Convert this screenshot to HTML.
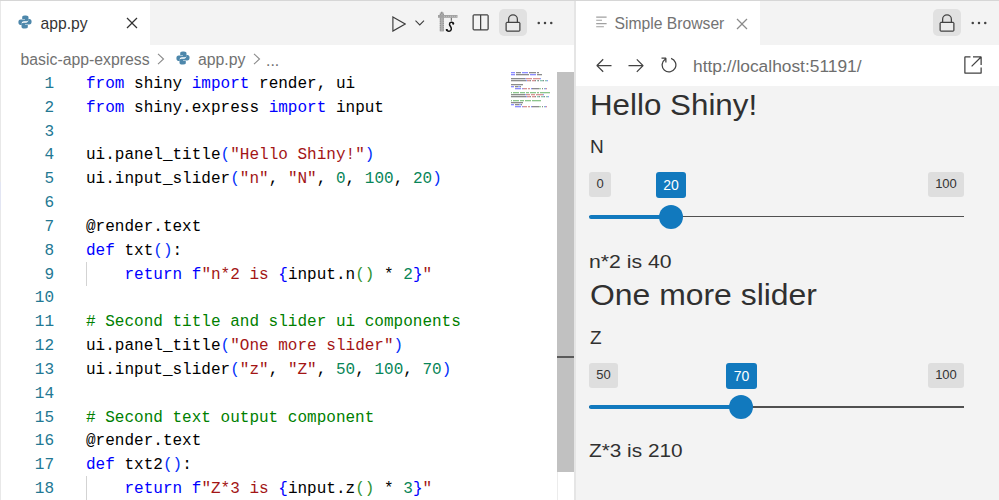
<!DOCTYPE html>
<html><head><meta charset="utf-8">
<style>
*{box-sizing:border-box;margin:0;padding:0}
html,body{width:999px;height:500px;overflow:hidden;background:#fff;font-family:"Liberation Sans",sans-serif}
.a{position:absolute}
#topline{left:0;top:0;width:999px;height:1px;background:#d6d6d6}
/* left group */
#ltabs{left:0;top:1px;width:574px;height:44px;background:#f3f3f3}
#ltab{left:0;top:1px;width:150px;height:44px;background:#fff}
#lborder{left:0;top:1px;width:1px;height:499px;background:#e8e8e8}
.tabtxt{font-size:15.7px;line-height:normal;color:#333;white-space:nowrap}
#bread{left:0;top:45px;width:574px;height:27px;background:#fff}
.bc{font-size:15.8px;color:#717171;white-space:nowrap}
#editor{left:0;top:72px;width:574px;height:428px;background:#fff}
.ln{position:absolute;left:0;width:54px;text-align:right;font-family:"Liberation Mono",monospace;font-size:16.03px;color:#237893;line-height:23.75px;height:23.75px}
.cl{position:absolute;left:86px;font-family:"Liberation Mono",monospace;font-size:16.03px;color:#000;line-height:23.75px;height:23.75px;white-space:pre}
.k{color:#0000ff}.s{color:#a31515}.n{color:#098658}.c{color:#008000}.p1{color:#0431fa}.p2{color:#319331}
#sbtrack{left:557px;top:72px;width:17px;height:428px;border-left:1px solid #ececec}
#sbthumb{left:557px;top:72px;width:17px;height:400px;background:#c1c1c1}
#sbmark{left:557px;top:356px;width:17px;height:2px;background:#5a5a5a}
#sep{left:574px;top:1px;width:2px;height:499px;background:#e5e5e5}
/* right group */
#rtabs{left:576px;top:1px;width:423px;height:44px;background:#f3f3f3}
#rtab{left:576px;top:1px;width:184px;height:44px;background:#fff}
#nav{left:576px;top:45px;width:423px;height:41px;background:#fff}
#page{left:576px;top:86px;width:423px;height:414px;background:#f3f3f3}
.btnbg{background:#e1e1e1;border-radius:5px}
.pg{color:#303030;transform-origin:0 0;white-space:nowrap;font-family:"Liberation Sans",sans-serif}
.badge{position:absolute;height:24.6px;border-radius:3px;background:#dedede;color:#333;font-size:13px;text-align:center;line-height:23px}
.vbadge{position:absolute;height:26px;border-radius:3px;background:#1179be;color:#fff;font-size:14px;text-align:center;line-height:26px}
.track{position:absolute;height:1.6px;background:#505050}
.bar{position:absolute;height:4.2px;background:#1179be;border-radius:2px}
.handle{position:absolute;width:24px;height:24px;border-radius:50%;background:#1179be}
</style></head><body>
<div id="topline" class="a"></div>

<!-- LEFT EDITOR GROUP -->
<div id="ltabs" class="a"></div>
<div id="ltab" class="a"></div>
<div id="bread" class="a"></div>
<div id="editor" class="a"></div>
<div id="lborder" class="a"></div>
<div class="a" style="left:0;top:182px;width:1px;height:28px;background:#e2e5f3"></div>

<!-- tab: python icon -->
<svg class="a" style="left:18px;top:15px" width="14" height="14" viewBox="0 0 14 14">
  <path d="M6.8 0.5c-2.6 0-2.6 1.1-2.6 1.8v1.6h2.8v0.6H2.6C1.2 4.5 0.4 5.6 0.4 7.2c0 1.8 0.9 2.8 2.1 2.8h1.2V8.4c0-1.2 1-2.1 2.2-2.1h2.8c1 0 1.8-0.8 1.8-1.8V2.3c0-1-0.9-1.8-2.6-1.8z" fill="#4d87ab"/>
  <path d="M7.2 13.5c2.6 0 2.6-1.1 2.6-1.8v-1.6H7v-0.6h4.4c1.4 0 2.2-1.1 2.2-2.7 0-1.8-0.9-2.8-2.1-2.8h-1.2v1.6c0 1.2-1 2.1-2.2 2.1H5.3c-1 0-1.8 0.8-1.8 1.8v2.2c0 1 0.9 1.8 2.6 1.8z" fill="#4d87ab"/>
</svg>
<div class="a tabtxt" style="left:40.5px;top:15.1px">app.py</div>
<svg class="a" style="left:122.4px;top:13.35px" width="20" height="20" viewBox="0 0 16 16"><path d="M8 8.707l3.646 3.647.708-.707L8.707 8l3.647-3.646-.707-.708L8 7.293 4.354 3.646l-.707.708L7.293 8l-3.646 3.646.707.708L8 8.707z" fill="#333333"/></svg>

<!-- toolbar -->
<svg class="a" style="left:392px;top:16px" width="14" height="16" viewBox="0 0 14 16"><path d="M0.9 0.9L13.2 8L0.9 15.1Z" fill="none" stroke="#3c3c3c" stroke-width="1.15" stroke-linejoin="miter"/></svg>
<svg class="a" style="left:415px;top:20px" width="10" height="6" viewBox="0 0 10 6"><path d="M0.5 0.6L4.75 4.9L9 0.6" fill="none" stroke="#3c3c3c" stroke-width="1.05"/></svg>
<svg class="a" style="left:436px;top:10px" width="24" height="24" viewBox="0 0 24 24">
  <rect x="3.8" y="2.5" width="4" height="19" fill="#b0b0b0"/>
  <path d="M4.3 4v17M7.3 4v17" stroke="#8c8c8c" stroke-width="1" stroke-dasharray="1.2 1"/>
  <path d="M5.8 1.8v2" stroke="#8c8c8c" stroke-width="1.4"/>
  <rect x="2" y="5" width="19.5" height="2.8" fill="#a2a2a2"/>
  <path d="M8 6.4H21" stroke="#c4c4c4" stroke-width="0.8" stroke-dasharray="1 1"/>
  <path d="M15.3 7.8v3" stroke="#555" stroke-width="1"/>
  <path d="M17.5 13.3C17 11.8 13.5 11.5 13.5 14.2C13.5 16 15.8 17 15.3 19.3C14.8 21.8 11.5 22 10.5 19.8" fill="none" stroke="#111" stroke-width="1.5" stroke-linecap="round"/><circle cx="17.2" cy="13.7" r="1" fill="#111"/><circle cx="10.9" cy="20" r="1.1" fill="#111"/>
</svg>
<svg class="a" style="left:470.1px;top:12.75px" width="20" height="20" viewBox="0 0 16 16"><path d="M14 1H3L2 2v11l1 1h11l1-1V2l-1-1zM8 13H3V2h5v11zm6 0H9V2h5v11z" fill="#424242"/></svg>
<div class="a btnbg" style="left:499px;top:9px;width:28px;height:27px"></div>
<svg class="a" style="left:503px;top:12.75px" width="20" height="20" viewBox="0 0 16 16"><rect x="2.6" y="7.6" width="10.8" height="6.8" fill="#ececec"/><path d="M13 7h-1V5a4 4 0 1 0-8 0v2H3l-1 1v6l1 1h10l1-1V8l-1-1zM5 5a3 3 0 1 1 6 0v2H5V5zm8 9H3V8h10v6z" fill="#424242"/></svg>
<svg class="a" style="left:534.75px;top:12.6px" width="20" height="20" viewBox="0 0 16 16"><path d="M4 8a1 1 0 1 1-2 0 1 1 0 0 1 2 0zm5 0a1 1 0 1 1-2 0 1 1 0 0 1 2 0zm5 0a1 1 0 1 1-2 0 1 1 0 0 1 2 0z" fill="#424242"/></svg>

<!-- breadcrumbs -->
<div class="a bc" style="left:20.5px;top:51px">basic-app-express</div>
<svg class="a" style="left:157px;top:52.5px" width="8" height="12" viewBox="0 0 8 12"><path d="M1 0.8L6.5 6L1 11.2" fill="none" stroke="#8a8a8a" stroke-width="1.1"/></svg>
<svg class="a" style="left:176px;top:51px" width="14" height="14" viewBox="0 0 14 14">
  <path d="M6.8 0.5c-2.6 0-2.6 1.1-2.6 1.8v1.6h2.8v0.6H2.6C1.2 4.5 0.4 5.6 0.4 7.2c0 1.8 0.9 2.8 2.1 2.8h1.2V8.4c0-1.2 1-2.1 2.2-2.1h2.8c1 0 1.8-0.8 1.8-1.8V2.3c0-1-0.9-1.8-2.6-1.8z" fill="#4d87ab"/>
  <path d="M7.2 13.5c2.6 0 2.6-1.1 2.6-1.8v-1.6H7v-0.6h4.4c1.4 0 2.2-1.1 2.2-2.7 0-1.8-0.9-2.8-2.1-2.8h-1.2v1.6c0 1.2-1 2.1-2.2 2.1H5.3c-1 0-1.8 0.8-1.8 1.8v2.2c0 1 0.9 1.8 2.6 1.8z" fill="#4d87ab"/>
</svg>
<div class="a bc" style="left:198px;top:51px">app.py</div>
<svg class="a" style="left:253px;top:52.5px" width="8" height="12" viewBox="0 0 8 12"><path d="M1 0.8L6.5 6L1 11.2" fill="none" stroke="#8a8a8a" stroke-width="1.1"/></svg>
<div class="a bc" style="left:266px;top:51.5px">...</div>

<!-- code -->
<div class="a" style="left:0;top:73px;width:557px;height:427px;overflow:hidden">
<div class="ln" style="top:0.00px">1</div>
<div class="ln" style="top:23.83px">2</div>
<div class="ln" style="top:47.66px">3</div>
<div class="ln" style="top:71.49px">4</div>
<div class="ln" style="top:95.32px">5</div>
<div class="ln" style="top:119.15px">6</div>
<div class="ln" style="top:142.98px">7</div>
<div class="ln" style="top:166.81px">8</div>
<div class="ln" style="top:190.64px">9</div>
<div class="ln" style="top:214.47px">10</div>
<div class="ln" style="top:238.30px">11</div>
<div class="ln" style="top:262.13px">12</div>
<div class="ln" style="top:285.96px">13</div>
<div class="ln" style="top:309.79px">14</div>
<div class="ln" style="top:333.62px">15</div>
<div class="ln" style="top:357.45px">16</div>
<div class="ln" style="top:381.28px">17</div>
<div class="ln" style="top:405.11px">18</div>

<div class="cl" style="top:0.00px"><span class="k">from</span> shiny <span class="k">import</span> render, ui</div>
<div class="cl" style="top:23.83px"><span class="k">from</span> shiny.express <span class="k">import</span> input</div>
<div class="cl" style="top:71.49px">ui.panel_title<span class="p1">(</span><span class="s">"Hello Shiny!"</span><span class="p1">)</span></div>
<div class="cl" style="top:95.32px">ui.input_slider<span class="p1">(</span><span class="s">"n"</span>, <span class="s">"N"</span>, <span class="n">0</span>, <span class="n">100</span>, <span class="n">20</span><span class="p1">)</span></div>
<div class="cl" style="top:142.98px">@render.text</div>
<div class="cl" style="top:166.81px"><span class="k">def</span> txt<span class="p1">()</span>:</div>
<div class="cl" style="top:190.64px">    <span class="k">return</span> <span class="k">f</span><span class="s">"n*2 is </span><span class="k">{</span>input.n<span class="p2">()</span> * <span class="n">2</span><span class="k">}</span><span class="s">"</span></div>
<div class="cl" style="top:238.30px"><span class="c"># Second title and slider ui components</span></div>
<div class="cl" style="top:262.13px">ui.panel_title<span class="p1">(</span><span class="s">"One more slider"</span><span class="p1">)</span></div>
<div class="cl" style="top:285.96px">ui.input_slider<span class="p1">(</span><span class="s">"z"</span>, <span class="s">"Z"</span>, <span class="n">50</span>, <span class="n">100</span>, <span class="n">70</span><span class="p1">)</span></div>
<div class="cl" style="top:333.62px"><span class="c"># Second text output component</span></div>
<div class="cl" style="top:357.45px">@render.text</div>
<div class="cl" style="top:381.28px"><span class="k">def</span> txt2<span class="p1">()</span>:</div>
<div class="cl" style="top:405.11px">    <span class="k">return</span> <span class="k">f</span><span class="s">"Z*3 is </span><span class="k">{</span>input.z<span class="p2">()</span> * <span class="n">3</span><span class="k">}</span><span class="s">"</span></div>
<div class="a" style="left:86px;top:189px;width:1px;height:23.75px;background:#d3d3d3"></div>
<div class="a" style="left:86px;top:402.75px;width:1px;height:24.25px;background:#d3d3d3"></div>
</div>

<!-- minimap placeholder -->
<svg class="a" style="left:511px;top:72px" width="42" height="38" viewBox="0 0 42 38"><rect x="0" y="0" width="4" height="1.3" fill-opacity="0.45" fill="#0000ff"/><rect x="5" y="0" width="5" height="1.3" fill-opacity="0.45" fill="#000000"/><rect x="11" y="0" width="6" height="1.3" fill-opacity="0.45" fill="#0000ff"/><rect x="18" y="0" width="7" height="1.3" fill-opacity="0.45" fill="#000000"/><rect x="26" y="0" width="2" height="1.3" fill-opacity="0.45" fill="#000000"/><rect x="0" y="2" width="4" height="1.3" fill-opacity="0.45" fill="#0000ff"/><rect x="5" y="2" width="13" height="1.3" fill-opacity="0.45" fill="#000000"/><rect x="19" y="2" width="6" height="1.3" fill-opacity="0.45" fill="#0000ff"/><rect x="26" y="2" width="5" height="1.3" fill-opacity="0.45" fill="#000000"/><rect x="0" y="6" width="14" height="1.3" fill-opacity="0.45" fill="#000000"/><rect x="14" y="6" width="1" height="1.3" fill-opacity="0.45" fill="#0431fa"/><rect x="15" y="6" width="6" height="1.3" fill-opacity="0.45" fill="#a31515"/><rect x="22" y="6" width="7" height="1.3" fill-opacity="0.45" fill="#a31515"/><rect x="29" y="6" width="1" height="1.3" fill-opacity="0.45" fill="#0431fa"/><rect x="0" y="8" width="15" height="1.3" fill-opacity="0.45" fill="#000000"/><rect x="15" y="8" width="1" height="1.3" fill-opacity="0.45" fill="#0431fa"/><rect x="16" y="8" width="3" height="1.3" fill-opacity="0.45" fill="#a31515"/><rect x="19" y="8" width="1" height="1.3" fill-opacity="0.45" fill="#000000"/><rect x="21" y="8" width="3" height="1.3" fill-opacity="0.45" fill="#a31515"/><rect x="24" y="8" width="1" height="1.3" fill-opacity="0.45" fill="#000000"/><rect x="26" y="8" width="1" height="1.3" fill-opacity="0.45" fill="#098658"/><rect x="27" y="8" width="1" height="1.3" fill-opacity="0.45" fill="#000000"/><rect x="29" y="8" width="3" height="1.3" fill-opacity="0.45" fill="#098658"/><rect x="32" y="8" width="1" height="1.3" fill-opacity="0.45" fill="#000000"/><rect x="34" y="8" width="2" height="1.3" fill-opacity="0.45" fill="#098658"/><rect x="36" y="8" width="1" height="1.3" fill-opacity="0.45" fill="#0431fa"/><rect x="0" y="12" width="12" height="1.3" fill-opacity="0.45" fill="#000000"/><rect x="0" y="14" width="3" height="1.3" fill-opacity="0.45" fill="#0000ff"/><rect x="4" y="14" width="3" height="1.3" fill-opacity="0.45" fill="#000000"/><rect x="7" y="14" width="2" height="1.3" fill-opacity="0.45" fill="#0431fa"/><rect x="9" y="14" width="1" height="1.3" fill-opacity="0.45" fill="#000000"/><rect x="4" y="16" width="6" height="1.3" fill-opacity="0.45" fill="#0000ff"/><rect x="11" y="16" width="1" height="1.3" fill-opacity="0.45" fill="#0000ff"/><rect x="12" y="16" width="4" height="1.3" fill-opacity="0.45" fill="#a31515"/><rect x="17" y="16" width="2" height="1.3" fill-opacity="0.45" fill="#a31515"/><rect x="20" y="16" width="1" height="1.3" fill-opacity="0.45" fill="#0000ff"/><rect x="21" y="16" width="7" height="1.3" fill-opacity="0.45" fill="#000000"/><rect x="28" y="16" width="2" height="1.3" fill-opacity="0.45" fill="#319331"/><rect x="31" y="16" width="1" height="1.3" fill-opacity="0.45" fill="#000000"/><rect x="33" y="16" width="1" height="1.3" fill-opacity="0.45" fill="#098658"/><rect x="34" y="16" width="1" height="1.3" fill-opacity="0.45" fill="#0000ff"/><rect x="35" y="16" width="1" height="1.3" fill-opacity="0.45" fill="#a31515"/><rect x="0" y="20" width="1" height="1.3" fill-opacity="0.45" fill="#008000"/><rect x="2" y="20" width="6" height="1.3" fill-opacity="0.45" fill="#008000"/><rect x="9" y="20" width="5" height="1.3" fill-opacity="0.45" fill="#008000"/><rect x="15" y="20" width="3" height="1.3" fill-opacity="0.45" fill="#008000"/><rect x="19" y="20" width="6" height="1.3" fill-opacity="0.45" fill="#008000"/><rect x="26" y="20" width="2" height="1.3" fill-opacity="0.45" fill="#008000"/><rect x="29" y="20" width="10" height="1.3" fill-opacity="0.45" fill="#008000"/><rect x="0" y="22" width="14" height="1.3" fill-opacity="0.45" fill="#000000"/><rect x="14" y="22" width="1" height="1.3" fill-opacity="0.45" fill="#0431fa"/><rect x="15" y="22" width="4" height="1.3" fill-opacity="0.45" fill="#a31515"/><rect x="20" y="22" width="4" height="1.3" fill-opacity="0.45" fill="#a31515"/><rect x="25" y="22" width="7" height="1.3" fill-opacity="0.45" fill="#a31515"/><rect x="32" y="22" width="1" height="1.3" fill-opacity="0.45" fill="#0431fa"/><rect x="0" y="24" width="15" height="1.3" fill-opacity="0.45" fill="#000000"/><rect x="15" y="24" width="1" height="1.3" fill-opacity="0.45" fill="#0431fa"/><rect x="16" y="24" width="3" height="1.3" fill-opacity="0.45" fill="#a31515"/><rect x="19" y="24" width="1" height="1.3" fill-opacity="0.45" fill="#000000"/><rect x="21" y="24" width="3" height="1.3" fill-opacity="0.45" fill="#a31515"/><rect x="24" y="24" width="1" height="1.3" fill-opacity="0.45" fill="#000000"/><rect x="26" y="24" width="2" height="1.3" fill-opacity="0.45" fill="#098658"/><rect x="28" y="24" width="1" height="1.3" fill-opacity="0.45" fill="#000000"/><rect x="30" y="24" width="3" height="1.3" fill-opacity="0.45" fill="#098658"/><rect x="33" y="24" width="1" height="1.3" fill-opacity="0.45" fill="#000000"/><rect x="35" y="24" width="2" height="1.3" fill-opacity="0.45" fill="#098658"/><rect x="37" y="24" width="1" height="1.3" fill-opacity="0.45" fill="#0431fa"/><rect x="0" y="28" width="1" height="1.3" fill-opacity="0.45" fill="#008000"/><rect x="2" y="28" width="6" height="1.3" fill-opacity="0.45" fill="#008000"/><rect x="9" y="28" width="4" height="1.3" fill-opacity="0.45" fill="#008000"/><rect x="14" y="28" width="6" height="1.3" fill-opacity="0.45" fill="#008000"/><rect x="21" y="28" width="9" height="1.3" fill-opacity="0.45" fill="#008000"/><rect x="0" y="30" width="12" height="1.3" fill-opacity="0.45" fill="#000000"/><rect x="0" y="32" width="3" height="1.3" fill-opacity="0.45" fill="#0000ff"/><rect x="4" y="32" width="4" height="1.3" fill-opacity="0.45" fill="#000000"/><rect x="8" y="32" width="2" height="1.3" fill-opacity="0.45" fill="#0431fa"/><rect x="10" y="32" width="1" height="1.3" fill-opacity="0.45" fill="#000000"/><rect x="4" y="34" width="6" height="1.3" fill-opacity="0.45" fill="#0000ff"/><rect x="11" y="34" width="1" height="1.3" fill-opacity="0.45" fill="#0000ff"/><rect x="12" y="34" width="4" height="1.3" fill-opacity="0.45" fill="#a31515"/><rect x="17" y="34" width="2" height="1.3" fill-opacity="0.45" fill="#a31515"/><rect x="20" y="34" width="1" height="1.3" fill-opacity="0.45" fill="#0000ff"/><rect x="21" y="34" width="7" height="1.3" fill-opacity="0.45" fill="#000000"/><rect x="28" y="34" width="2" height="1.3" fill-opacity="0.45" fill="#319331"/><rect x="31" y="34" width="1" height="1.3" fill-opacity="0.45" fill="#000000"/><rect x="33" y="34" width="1" height="1.3" fill-opacity="0.45" fill="#098658"/><rect x="34" y="34" width="1" height="1.3" fill-opacity="0.45" fill="#0000ff"/><rect x="35" y="34" width="1" height="1.3" fill-opacity="0.45" fill="#a31515"/></svg>

<div id="sbtrack" class="a"></div>
<div id="sbthumb" class="a"></div>
<div id="sbmark" class="a"></div>
<div id="sep" class="a"></div>

<!-- RIGHT GROUP -->
<div id="rtabs" class="a"></div>
<div id="rtab" class="a"></div>
<svg class="a" style="left:596px;top:16px" width="11" height="12" viewBox="0 0 11 12"><path d="M0.2 1.1H10.6M0.2 4.3H6M0.2 7.6H10.6M0.2 10.7H7.9" stroke="#a0a0a0" stroke-width="1.05"/></svg>
<div class="a tabtxt" style="left:614.5px;top:14.6px;color:#737373">Simple Browser</div>
<svg class="a" style="left:731.85px;top:13.65px" width="20" height="20" viewBox="0 0 16 16"><path d="M8 8.707l3.646 3.647.708-.707L8.707 8l3.647-3.646-.707-.708L8 7.293 4.354 3.646l-.707.708L7.293 8l-3.646 3.646.707.708L8 8.707z" fill="#8b8b8b"/></svg>
<div class="a btnbg" style="left:933px;top:9px;width:28px;height:27px"></div>
<svg class="a" style="left:937px;top:12.75px" width="20" height="20" viewBox="0 0 16 16"><rect x="2.6" y="7.6" width="10.8" height="6.8" fill="#ececec"/><path d="M13 7h-1V5a4 4 0 1 0-8 0v2H3l-1 1v6l1 1h10l1-1V8l-1-1zM5 5a3 3 0 1 1 6 0v2H5V5zm8 9H3V8h10v6z" fill="#424242"/></svg>
<svg class="a" style="left:969.25px;top:12.6px" width="20" height="20" viewBox="0 0 16 16"><path d="M4 8a1 1 0 1 1-2 0 1 1 0 0 1 2 0zm5 0a1 1 0 1 1-2 0 1 1 0 0 1 2 0zm5 0a1 1 0 1 1-2 0 1 1 0 0 1 2 0z" fill="#424242"/></svg>

<div id="nav" class="a"></div>
<svg class="a" style="left:593.7px;top:55.1px" width="20" height="20" viewBox="0 0 16 16"><path d="M7 3.093l-5 5V8.8l5 5 .707-.707-4.146-4.147H14v-1H3.56L7.708 3.8 7 3.093z" fill="#424242"/></svg>
<svg class="a" style="left:626.3px;top:55.1px" width="20" height="20" viewBox="0 0 16 16"><path d="M9 13.887l5-5V8.18l-5-5-.707.707 4.146 4.147H2v1h10.44L8.292 13.18l.707.707z" fill="#424242"/></svg>
<svg class="a" style="left:659px;top:54.5px" width="20" height="20" viewBox="0 0 16 16"><path d="M4.681 3H2V2h3.5l.5.5V6H5V4a5 5 0 1 0 4.53-.761l.302-.954A6 6 0 1 1 4.681 3z" fill="#424242"/></svg>
<div class="a" style="left:693px;top:55.9px;font-size:17.36px;color:#6e6e6e;white-space:nowrap">http://localhost:51191/</div>
<svg class="a" style="left:963.05px;top:54.95px" width="20" height="20" viewBox="0 0 16 16"><path d="M1.5 1H6v1H2v12h12v-4h1v4.5l-.5.5h-13l-.5-.5v-13l.5-.5z M15 1.5V8h-1V2.707L7.243 9.465l-.707-.708L13.293 2H8V1h6.5l.5.5z" fill="#424242"/></svg>

<div id="page" class="a"></div>
<div class="a pg" style="left:590px;top:89px;font-size:29px;transform:scaleX(1.08)">Hello Shiny!</div>
<div class="a pg" style="left:590px;top:136px;font-size:19px">N</div>
<div class="badge" style="left:589px;top:172px;width:22px">0</div>
<div class="badge" style="left:928px;top:172px;width:36px">100</div>
<div class="vbadge" style="left:656px;top:172px;width:30px">20</div>
<div class="track" style="left:589px;top:215.6px;width:375px"></div>
<div class="bar" style="left:589px;top:214.6px;width:82px"></div>
<div class="handle" style="left:659px;top:205px"></div>

<div class="a pg" style="left:589px;top:250.5px;font-size:19px;transform:scaleX(1.116)">n*2 is 40</div>
<div class="a pg" style="left:589.6px;top:279px;font-size:29px;transform:scaleX(1.10)">One more slider</div>
<div class="a pg" style="left:590px;top:327px;font-size:19px">Z</div>
<div class="badge" style="left:589px;top:363px;width:29px">50</div>
<div class="badge" style="left:928px;top:363px;width:36px">100</div>
<div class="vbadge" style="left:726px;top:363px;width:31px">70</div>
<div class="track" style="left:589px;top:406.1px;width:375px"></div>
<div class="bar" style="left:589px;top:404.8px;width:152px"></div>
<div class="handle" style="left:729px;top:395px"></div>
<div class="a pg" style="left:589px;top:440px;font-size:19px;transform:scaleX(1.094)">Z*3 is 210</div>
</body></html>
